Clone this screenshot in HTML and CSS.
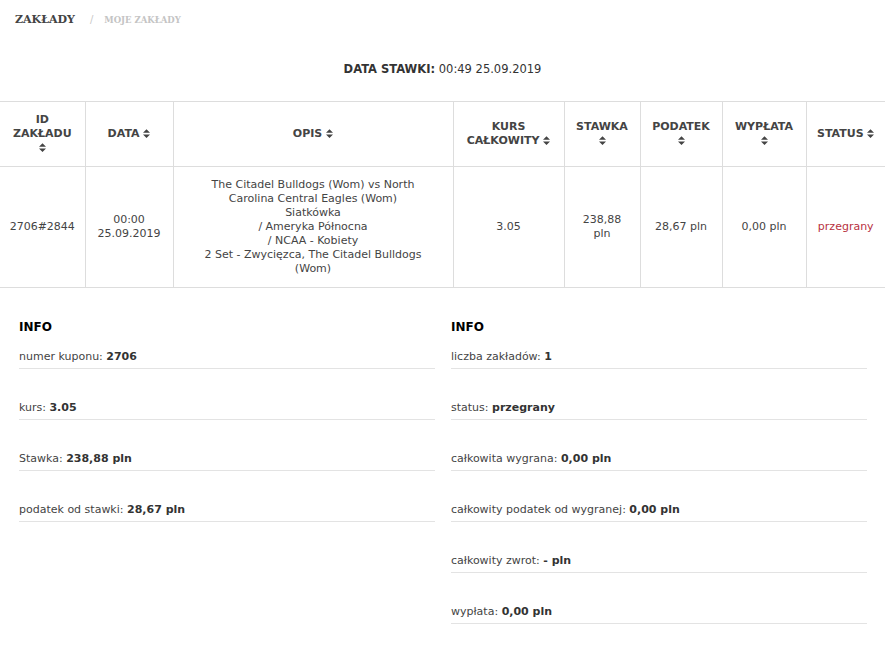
FILE: index.html
```html
<!DOCTYPE html>
<html lang="pl">
<head>
    <meta charset="UTF-8">
    <meta name="viewport" content="width=device-width, initial-scale=1.0">
    <title>Moje zakłady</title>
    <link rel="stylesheet" href="styles.css">
</head>
<body>
    <div class="page">
        <!-- Okruszki -->
        <div class="breadcrumb">
            <span class="crumb-main">ZAKŁADY</span>
            <span class="crumb-sep">/</span>
            <span class="crumb-sub">MOJE ZAKŁADY</span>
        </div>

        <div class="bet-date"><strong>DATA STAWKI:</strong> 00:49 25.09.2019</div>

        <!-- Tabela zakładów -->
        <table class="bets">
            <thead>
                <tr>
                    <th class="c-id">ID<br>ZAKŁADU<br><svg class="sort" viewBox="0 0 8 10"><path d="M4 0L8 4H0z M4 10L0 6H8z"/></svg></th>
                    <th class="c-date">DATA <svg class="sort" viewBox="0 0 8 10"><path d="M4 0L8 4H0z M4 10L0 6H8z"/></svg></th>
                    <th class="c-desc">OPIS <svg class="sort" viewBox="0 0 8 10"><path d="M4 0L8 4H0z M4 10L0 6H8z"/></svg></th>
                    <th class="c-odds">KURS<br>CAŁKOWITY <svg class="sort" viewBox="0 0 8 10"><path d="M4 0L8 4H0z M4 10L0 6H8z"/></svg></th>
                    <th class="c-stake">STAWKA<br><svg class="sort" viewBox="0 0 8 10"><path d="M4 0L8 4H0z M4 10L0 6H8z"/></svg></th>
                    <th class="c-tax">PODATEK<br><svg class="sort" viewBox="0 0 8 10"><path d="M4 0L8 4H0z M4 10L0 6H8z"/></svg></th>
                    <th class="c-pay">WYPŁATA<br><svg class="sort" viewBox="0 0 8 10"><path d="M4 0L8 4H0z M4 10L0 6H8z"/></svg></th>
                    <th class="c-status">STATUS <svg class="sort" viewBox="0 0 8 10"><path d="M4 0L8 4H0z M4 10L0 6H8z"/></svg></th>
                </tr>
            </thead>
            <tbody>
                <tr>
                    <td>2706#2844</td>
                    <td>00:00<br>25.09.2019</td>
                    <td class="desc">The Citadel Bulldogs (Wom) vs North Carolina Central Eagles (Wom)<br>Siatkówka<br>/ Ameryka Północna<br>/ NCAA - Kobiety<br>2 Set - Zwycięzca, The Citadel Bulldogs (Wom)</td>
                    <td>3.05</td>
                    <td>238,88<br>pln</td>
                    <td>28,67 pln</td>
                    <td>0,00 pln</td>
                    <td class="lost">przegrany</td>
                </tr>
            </tbody>
        </table>

        <!-- Podsumowanie -->
        <div class="info-grid">
            <div class="info-col">
                <h4>INFO</h4>
                <div class="info-row">numer kuponu: <b>2706</b></div>
                <div class="info-row">kurs: <b>3.05</b></div>
                <div class="info-row">Stawka: <b>238,88 pln</b></div>
                <div class="info-row">podatek od stawki: <b>28,67 pln</b></div>
            </div>
            <div class="info-col">
                <h4>INFO</h4>
                <div class="info-row">liczba zakładów: <b>1</b></div>
                <div class="info-row">status: <b>przegrany</b></div>
                <div class="info-row">całkowita wygrana: <b>0,00 pln</b></div>
                <div class="info-row">całkowity podatek od wygranej: <b>0,00 pln</b></div>
                <div class="info-row">całkowity zwrot: <b>- pln</b></div>
                <div class="info-row">wypłata: <b>0,00 pln</b></div>
            </div>
        </div>
    </div>
</body>
</html>
```

FILE: styles.css
```css
* {
    margin: 0;
    padding: 0;
    box-sizing: border-box;
}

body {
    font-family: 'DejaVu Sans', 'Noto Sans', sans-serif;
    font-size: 11px;
    color: #444;
    background: #fff;
}

.page {
    width: 885px;
}

.breadcrumb {
    display: flex;
    align-items: baseline;
    padding: 13px 15px 0;
    height: 40px;
}

.crumb-main {
    font-family: 'DejaVu Serif', 'Liberation Serif', serif;
    font-weight: bold;
    font-size: 11px;
    color: #444;
}

.crumb-sep {
    color: #c8c8c8;
    font-size: 10px;
    margin: 0 11px 0 15px;
}

.crumb-sub {
    font-family: 'DejaVu Serif', 'Liberation Serif', serif;
    font-weight: bold;
    font-size: 8.5px;
    color: #c4c4c4;
}

.bet-date {
    text-align: center;
    font-size: 11.5px;
    color: #333;
    padding-top: 22px;
    height: 61px;
}

.bets {
    width: 885px;
    border-collapse: collapse;
    table-layout: fixed;
}

.bets th,
.bets td {
    border: 1px solid #ddd;
    text-align: center;
    vertical-align: middle;
    line-height: 14px;
    padding: 0 6px;
}

.bets tr > :first-child {
    border-left: none;
}

.bets tr > :last-child {
    border-right: none;
}

.bets th {
    height: 65px;
    font-weight: bold;
    font-size: 11px;
    color: #444;
}

.bets td {
    height: 121px;
    color: #444;
}

.bets td.desc {
    padding: 0 17px;
}

.bets td.lost {
    color: #b8323f;
}

.c-id { width: 85px; }
.c-date { width: 88px; }
.c-desc { width: 280px; }
.c-odds { width: 111px; }
.c-stake { width: 76px; }
.c-tax { width: 82px; }
.c-pay { width: 84px; }
.c-status { width: 79px; }

.sort {
    width: 7px;
    height: 9px;
    fill: #444;
    vertical-align: -1px;
}

.info-grid {
    display: grid;
    grid-template-columns: 1fr 1fr;
    gap: 16px;
    padding: 32px 18px 0 19px;
}

.info-col h4 {
    font-size: 12px;
    color: #000;
    line-height: 14px;
    margin-bottom: 16px;
}

.info-row {
    line-height: 14px;
    padding-bottom: 4px;
    border-bottom: 1px solid #e3e3e3;
    margin-bottom: 32px;
    color: #444;
}

.info-row b {
    color: #333;
}
```
